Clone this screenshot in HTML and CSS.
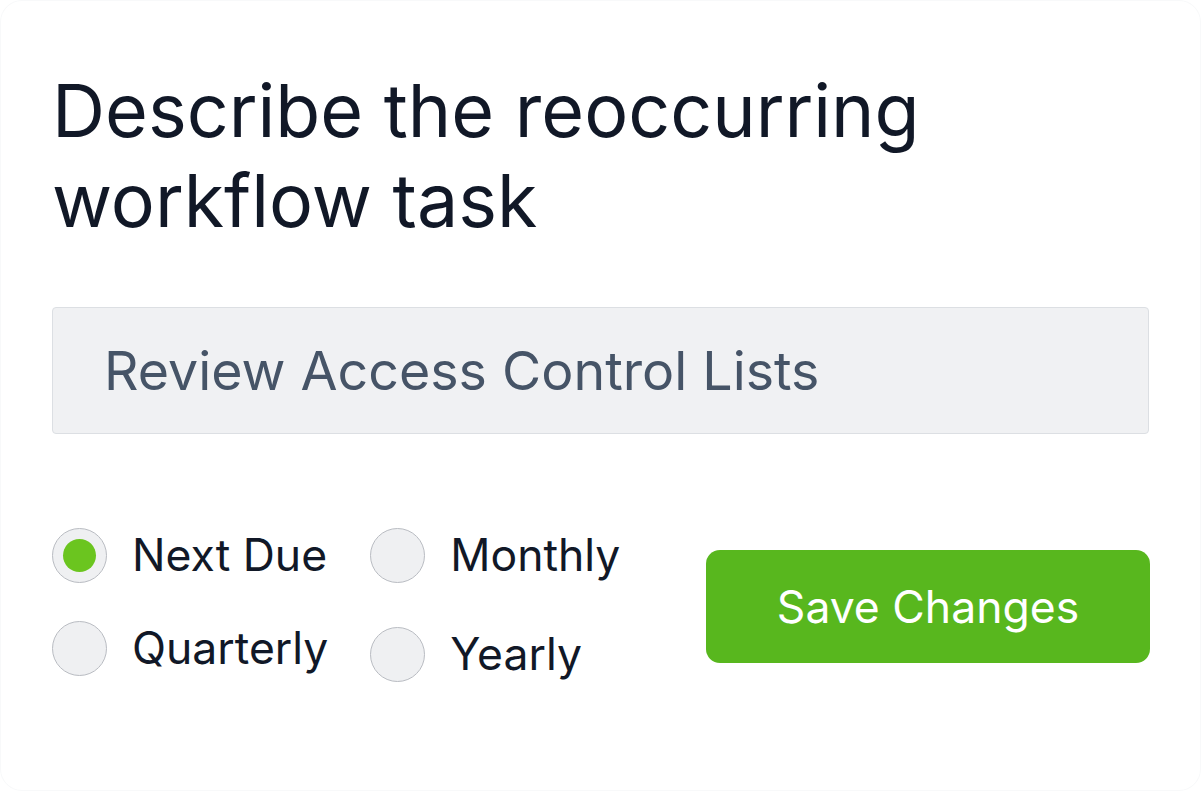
FILE: index.html
```html
<!DOCTYPE html>
<html lang="en">
<head>
<meta charset="utf-8">
<title>Reoccurring workflow task</title>
<link rel="stylesheet" href="styles.css">
</head>
<body>
<div class="card">
  <h1 class="title">Describe the reoccurring workflow task</h1>
  <div class="task-input">Review Access Control Lists</div>
  <div class="bottom-row">
    <div class="radio-group">
      <div class="radio-col">
        <label class="radio"><span class="dot checked"></span><span class="radio-label">Next Due</span></label>
        <label class="radio"><span class="dot"></span><span class="radio-label">Quarterly</span></label>
      </div>
      <div class="radio-col radio-col-wide">
        <label class="radio"><span class="dot"></span><span class="radio-label">Monthly</span></label>
        <label class="radio"><span class="dot"></span><span class="radio-label">Yearly</span></label>
      </div>
    </div>
    <button class="save-btn">Save Changes</button>
  </div>
</div>
</body>
</html>
```

FILE: styles.css
```css
html, body {
  margin: 0;
  padding: 0;
  background: #ffffff;
}

body {
  font-family: Inter, "Noto Sans", sans-serif;
  color: #111827;
}

.card {
  box-sizing: border-box;
  width: 1201px;
  height: 791px;
  background: #ffffff;
  border: 1px solid #f8f9fa;
  border-radius: 22px;
  padding: 65px 51px 0 51px;
}

.title {
  margin: 0;
  font-size: 73.5px;
  line-height: 90px;
  font-weight: 400;
  color: #111827;
  letter-spacing: 0;
  width: 940px;
}

.task-input {
  margin-top: 61px;
  box-sizing: border-box;
  height: 127px;
  background: #f0f1f3;
  border: 1px solid #dcdfe3;
  border-radius: 4px;
  padding: 0 0 0 51px;
  display: flex;
  align-items: center;
  font-size: 53.7px;
  color: #465467;
}

.bottom-row {
  margin-top: 94px;
  display: flex;
  justify-content: space-between;
  align-items: flex-start;
}

.radio-group {
  display: flex;
  gap: 42px;
}

.radio-col {
  display: flex;
  flex-direction: column;
  gap: 39px;
}

.radio-col-wide {
  gap: 45px;
}

.radio {
  display: flex;
  align-items: center;
  gap: 25px;
  height: 54px;
}

.dot {
  box-sizing: border-box;
  width: 55px;
  height: 55px;
  border-radius: 50%;
  background: #eff0f2;
  border: 1px solid #b9bcc2;
  display: flex;
  align-items: center;
  justify-content: center;
  flex-shrink: 0;
}

.dot.checked::after {
  content: "";
  width: 33px;
  height: 33px;
  border-radius: 50%;
  background: #6bc51f;
}

.radio-label {
  font-size: 44.5px;
  color: #111827;
  line-height: 54px;
}

.save-btn {
  margin-top: 22px;
  margin-right: -1px;
  width: 444px;
  height: 113px;
  border: none;
  border-radius: 14px;
  background: #58b71e;
  color: #ffffff;
  font-family: Inter, "Noto Sans", sans-serif;
  font-size: 44.5px;
  font-weight: 400;
  cursor: pointer;
}
```
